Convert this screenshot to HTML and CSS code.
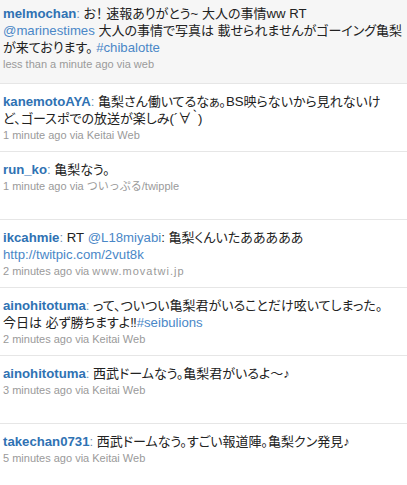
FILE: index.html
```html
<!DOCTYPE html>
<html lang="ja">
<head>
<meta charset="utf-8">
<link rel="stylesheet" href="styles.css">
</head>
<body>
<ol class="timeline">
  <li class="entry highlight">
    <p class="content"><a class="user">melmochan</a><span class="colon">:</span> お！ 速報ありがとう<span class="lat">~</span> 大人の事情<span class="lat">ww RT</span><br><a class="link">@marinestimes</a> 大人の事情で写真は 載せられませんがゴーイング亀梨<br>が来ております。 <a class="link">#chibalotte</a></p>
    <p class="meta">less than a minute ago via web</p>
  </li>
  <li class="entry">
    <p class="content"><a class="user">kanemotoAYA</a><span class="colon">:</span> 亀梨さん働いてるなぁ。<span class="lat">BS</span>映らないから見れないけ<br>ど、ゴースポでの放送が楽しみ<span class="lat">(´∀｀)</span></p>
    <p class="meta">1 minute ago via Keitai Web</p>
  </li>
  <li class="entry">
    <p class="content"><a class="user">run_ko</a><span class="colon">:</span> 亀梨なう。</p>
    <p class="meta">1 minute ago via ついっぷる/twipple</p>
  </li>
  <li class="entry">
    <p class="content"><a class="user">ikcahmie</a><span class="colon">:</span> <span class="lat">RT</span> <a class="link">@L18miyabi</a><span class="lat">:</span> 亀梨くんいたあああああ<br><a class="link">http://twitpic.com/2vut8k</a></p>
    <p class="meta">2 minutes ago via <span class="spaced">www.movatwi.jp</span></p>
  </li>
  <li class="entry">
    <p class="content"><a class="user">ainohitotuma</a><span class="colon">:</span> って、ついつい亀梨君がいることだけ呟いてしまった。<br>今日は 必ず勝ちますよ‼<a class="link">#seibulions</a></p>
    <p class="meta">2 minutes ago via Keitai Web</p>
  </li>
  <li class="entry">
    <p class="content"><a class="user">ainohitotuma</a><span class="colon">:</span> 西武ドームなう。亀梨君がいるよ～♪</p>
    <p class="meta">3 minutes ago via Keitai Web</p>
  </li>
  <li class="entry">
    <p class="content"><a class="user">takechan0731</a><span class="colon">:</span> 西武ドームなう。すごい報道陣。亀梨クン発見♪</p>
    <p class="meta">5 minutes ago via Keitai Web</p>
  </li>
</ol>
</body>
</html>
```

FILE: styles.css
```css
html, body {
  margin: 0;
  padding: 0;
  background: #ffffff;
}

body {
  font-family: "Liberation Sans", "Noto Sans CJK JP", sans-serif;
  color: #222222;
  overflow: hidden;
}

.timeline {
  list-style: none;
  margin: 0;
  padding: 0;
}

.entry {
  padding: 9px 6px 7px 3px;
  min-height: 51px;
  border-bottom: 1px solid #e6e6e6;
}

.entry.highlight {
  background: #f6f6f6;
  padding-top: 5px;
  padding-bottom: 10px;
  min-height: 0;
}

.content {
  margin: 0;
  font-size: 13px;
  line-height: 17px;
  white-space: nowrap;
  font-feature-settings: "palt";
}

.lat,
.user,
.link,
.colon {
  font-size: 13.2px;
  vertical-align: top;
}

.user {
  color: #2f72b3;
  font-weight: bold;
}

.colon {
  color: #6d8fb3;
}

.link {
  color: #4a87c7;
}

.meta {
  margin: 0;
  font-size: 11px;
  line-height: 17px;
  color: #9a9a9a;
  white-space: nowrap;
}

.spaced {
  letter-spacing: 1px;
}
```
